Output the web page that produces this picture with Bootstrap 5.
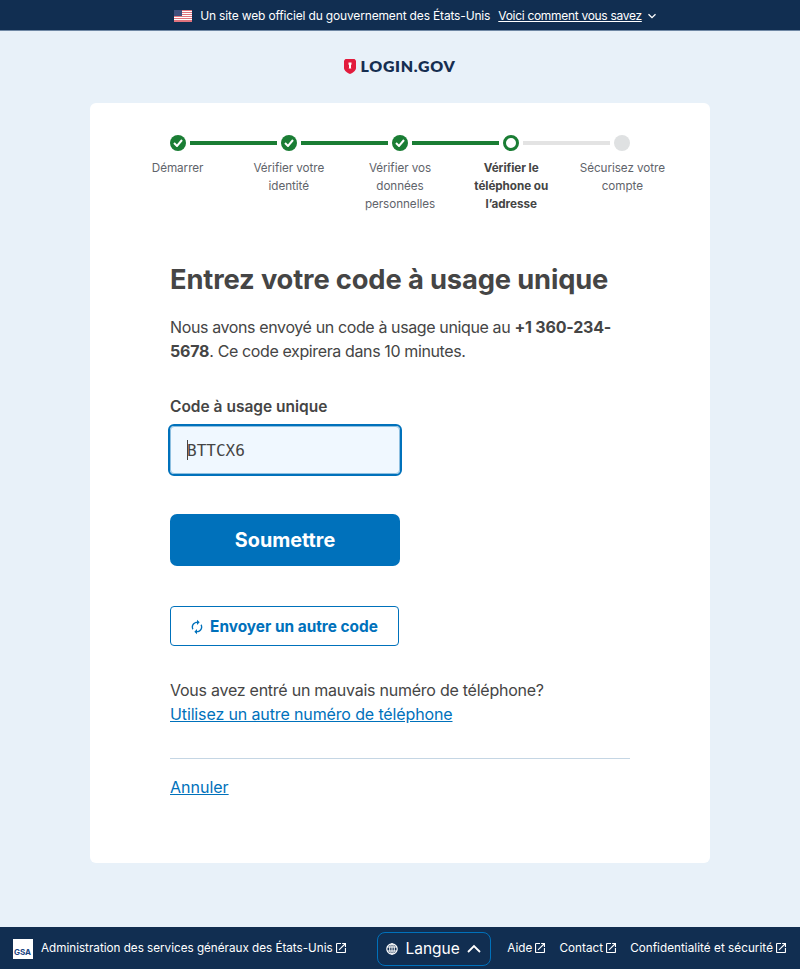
<!DOCTYPE html>
<html lang="fr">
<head>
<meta charset="utf-8">
<title>Login.gov</title>
<link href="https://cdn.jsdelivr.net/npm/bootstrap@5.3.0/dist/css/bootstrap.min.css" rel="stylesheet">
<style>
html,body{height:100%}
body{font-family:"Inter","Liberation Sans",sans-serif;background:#e8f1f9;color:#454545;font-size:16px;min-height:969px}
.gov-banner{background:#112e51;color:#fff;height:31px;border-bottom:1px solid #6f88a5;font-size:12px;gap:8px;letter-spacing:-.16px;padding:1px 0 0 31px}
.gov-banner a{color:#fff;text-decoration-thickness:1px;letter-spacing:-.025em}
.gov-chev{margin-left:-3px}
.flag-ico{width:18px;height:12px}
.logo-row{height:72px;padding-bottom:2px}
.logo-text{font-family:"Lato","Liberation Sans",sans-serif;font-weight:800;color:#162e51;font-size:15.9px;letter-spacing:.045em;margin-left:4px;line-height:1}
.panel{width:620px;height:760px;margin:0 auto;background:#fff;border-radius:6px;padding:32px 80px 0}
.stepper{margin:0 -48px;width:556px;display:grid;grid-template-columns:repeat(5,1fr)}
.step-head{height:16px;margin-bottom:8px}
.step-line{flex:1;height:4px;background:#1a7d34}
.step-line.off{background:#e3e3e3}
.step-line.none{background:transparent}
.step-dot{width:16px;height:16px;border-radius:50%;margin:0 4px;flex:none;background:#1a7d34}
.step-dot.now{background:#fff;border:3px solid #1a7d34}
.step-dot.todo{background:#dfe1e2}
.step-name{font-size:11.7px;line-height:18px;color:#5f646b;text-align:center;padding:0 12px;letter-spacing:-.005em}
.step-name.cur{font-weight:700;color:#454545}
.page-title{font-size:27.3px;font-weight:700;line-height:32px;margin:51px 0 19px;color:#454545;letter-spacing:-.005em}
.intro{line-height:24px;margin:0 0 32px;letter-spacing:-.38px}
.intro strong{letter-spacing:-.2px}
.field-label{display:block;font-weight:600;line-height:24px;margin:0 0 7px;font-size:15.5px}
.code-wrap{width:230px;height:48px}
.code-input{width:100%;height:100%;display:block;background:#f0f8ff;border:1px solid #8dbfe0;border-radius:4px;outline:2px solid #0071bb;outline-offset:0;box-shadow:none;font-family:"DejaVu Sans Mono","Liberation Mono",monospace;font-size:16px;padding:1px 16px 0;color:#454545}
.caret-mark{position:absolute;left:17px;top:14px;width:1px;height:20px;background:#454545}
.submit-btn{width:230px;height:52px;margin-top:40px;background:#0071bb;border:0;border-radius:7px;color:#fff;font-weight:700;font-size:19.8px;display:block;padding:2px 0 0}
.resend-btn{width:229px;height:40px;margin-top:40px;background:#fff;border:1px solid #0071bb;border-radius:4px;color:#0071bb;font-weight:700;font-size:15.4px;gap:5px;padding:1px 2px 0 0}
.wrong-num{margin:32px 0 0;line-height:24px;letter-spacing:-.25px}
.wrong-num a{letter-spacing:-.13px}
.panel a{color:#0071bb}
.panel hr{margin:32px 0 16px;border-color:#c5d6e4;opacity:1}
.foot-bar{background:#112e51;color:#fff;height:42px;font-size:11.7px;padding:1px 13px 0}
.foot-bar a{color:#fff;text-decoration:none;letter-spacing:.004em}
.foot-main{letter-spacing:-.01px!important}
.gsa-box{width:20px;height:20px;background:#fff;margin-right:8px;flex:none;color:#1a4480;font-size:8px;font-weight:700;line-height:1;padding:9px 0 0 1px}
.lang-btn{width:114px;height:34px;margin-left:31px;margin-right:16px;border:1px solid #0071bb;border-radius:8px;color:#fff;font-size:15.5px;gap:7px;background:transparent;padding:0;flex:none}
.ext{width:10px;height:10px;margin-left:3px;flex:none}
.foot-links{gap:14px;padding-right:1px}
</style>
</head>
<body class="d-flex flex-column">
<div class="gov-banner d-flex align-items-center justify-content-center">
<svg class="flag-ico" viewBox="0 0 18 12"><rect width="18" height="12" fill="#fff"/><g fill="#e0737d"><rect width="18" height="1"/><rect y="2" width="18" height="1"/><rect y="4" width="18" height="1"/><rect y="6" width="18" height="1"/><rect y="8" width="18" height="1"/><rect y="10" width="18" height="1"/><rect y="11" width="18" height="1"/></g><rect width="8" height="6" fill="#3f4f7d"/></svg>
<span>Un site web officiel du gouvernement des États-Unis</span>
<a href="#">Voici comment vous savez</a>
<svg class="gov-chev" width="10" height="10" viewBox="0 0 10 10"><path d="M1.500 3.200 5 6.700l3.500-3.500" fill="none" stroke="#fff" stroke-width="1.300"/></svg>
</div>
<div class="logo-row d-flex align-items-center justify-content-center">
<svg width="12" height="15" viewBox="0 0 12 15"><path d="M0 1.500 1.500 0h9L12 1.500V9c0 2.500-3 5-6 6-3-1-6-3.500-6-6z" fill="#e21c3d"/><path d="M4.500 3.500h3v2l-.5.5v3l.5.5H4.500L5 9V6l-.5-.5z" fill="#fff"/></svg>
<span class="logo-text">LOGIN.GOV</span>
</div>
<main class="panel">
<div class="stepper">
<div><div class="step-head d-flex align-items-center"><span class="step-line none"></span><span class="step-dot d-flex align-items-center justify-content-center"><svg width="10" height="8" viewBox="0 0 10 8"><path d="M1 4l3 3 5-6" fill="none" stroke="#fff" stroke-width="2"/></svg></span><span class="step-line"></span></div><div class="step-name">Démarrer</div></div>
<div><div class="step-head d-flex align-items-center"><span class="step-line"></span><span class="step-dot d-flex align-items-center justify-content-center"><svg width="10" height="8" viewBox="0 0 10 8"><path d="M1 4l3 3 5-6" fill="none" stroke="#fff" stroke-width="2"/></svg></span><span class="step-line"></span></div><div class="step-name">Vérifier votre identité</div></div>
<div><div class="step-head d-flex align-items-center"><span class="step-line"></span><span class="step-dot d-flex align-items-center justify-content-center"><svg width="10" height="8" viewBox="0 0 10 8"><path d="M1 4l3 3 5-6" fill="none" stroke="#fff" stroke-width="2"/></svg></span><span class="step-line"></span></div><div class="step-name">Vérifier vos données personnelles</div></div>
<div><div class="step-head d-flex align-items-center"><span class="step-line"></span><span class="step-dot now"></span><span class="step-line off"></span></div><div class="step-name cur">Vérifier le téléphone ou l’adresse</div></div>
<div><div class="step-head d-flex align-items-center"><span class="step-line off"></span><span class="step-dot todo"></span><span class="step-line none"></span></div><div class="step-name">Sécurisez votre compte</div></div>
</div>
<h1 class="page-title">Entrez votre code à usage unique</h1>
<p class="intro">Nous avons envoyé un code à usage unique au <strong>+1 360-234-5678</strong>. Ce code expirera dans 10 minutes.</p>
<label class="field-label" for="code">Code à usage unique</label>
<div class="code-wrap position-relative"><input id="code" class="code-input" type="text" value="BTTCX6"><span class="caret-mark"></span></div>
<button class="submit-btn" type="button">Soumettre</button>
<button class="resend-btn d-flex align-items-center justify-content-center" type="button"><svg width="16" height="16" viewBox="0 0 24 24"><path fill="#0071bb" d="M12 6v3l4-4-4-4v3c-4.420 0-8 3.580-8 8 0 1.570.46 3.030 1.240 4.260L6.700 14.800A5.870 5.870 0 0 1 6 12c0-3.310 2.690-6 6-6zm6.760 1.740L17.300 9.200c.44.84.7 1.790.7 2.800 0 3.310-2.690 6-6 6v-3l-4 4 4 4v-3c4.420 0 8-3.580 8-8 0-1.570-.46-3.030-1.240-4.260z"/></svg>Envoyer un autre code</button>
<p class="wrong-num">Vous avez entré un mauvais numéro de téléphone?<br><a href="#">Utilisez un autre numéro de téléphone</a></p>
<hr>
<a href="#">Annuler</a>
</main>
<footer class="foot-bar d-flex align-items-center mt-auto text-nowrap">
<div class="gsa-box">GSA</div>
<a href="#" class="foot-main d-flex align-items-center">Administration des services généraux des États-Unis<svg class="ext" viewBox="3 3 18 18"><path fill="#fff" d="M19 19H5V5h7V3H5a2 2 0 0 0-2 2v14c0 1.100.9 2 2 2h14c1.100 0 2-.9 2-2v-7h-2v7zM14 3v2h3.590l-9.830 9.830 1.410 1.410L19 6.410V10h2V3h-7z"/></svg></a>
<button class="lang-btn d-flex align-items-center justify-content-center" type="button"><svg width="12" height="12" viewBox="0 0 12 12"><circle cx="6" cy="6" r="5.200" fill="none" stroke="#fff" stroke-width="1.200"/><ellipse cx="6" cy="6" rx="2.300" ry="5.200" fill="none" stroke="#fff"/><path d="M1 4h10M1 8h10M6 1v10" stroke="#fff"/></svg>Langue<svg width="14" height="9" viewBox="0 0 14 9"><path d="M1 8l6-6 6 6" fill="none" stroke="#fff" stroke-width="1.800"/></svg></button>
<div class="foot-links d-flex ms-auto">
<a href="#" class="d-flex align-items-center">Aide<svg class="ext" viewBox="3 3 18 18"><path fill="#fff" d="M19 19H5V5h7V3H5a2 2 0 0 0-2 2v14c0 1.100.9 2 2 2h14c1.100 0 2-.9 2-2v-7h-2v7zM14 3v2h3.590l-9.830 9.830 1.410 1.410L19 6.410V10h2V3h-7z"/></svg></a>
<a href="#" class="d-flex align-items-center">Contact<svg class="ext" viewBox="3 3 18 18"><path fill="#fff" d="M19 19H5V5h7V3H5a2 2 0 0 0-2 2v14c0 1.100.9 2 2 2h14c1.100 0 2-.9 2-2v-7h-2v7zM14 3v2h3.590l-9.830 9.830 1.410 1.410L19 6.410V10h2V3h-7z"/></svg></a>
<a href="#" class="d-flex align-items-center">Confidentialité et sécurité<svg class="ext" viewBox="3 3 18 18"><path fill="#fff" d="M19 19H5V5h7V3H5a2 2 0 0 0-2 2v14c0 1.100.9 2 2 2h14c1.100 0 2-.9 2-2v-7h-2v7zM14 3v2h3.590l-9.830 9.830 1.410 1.410L19 6.410V10h2V3h-7z"/></svg></a>
</div>
</footer>
</body>
</html>
